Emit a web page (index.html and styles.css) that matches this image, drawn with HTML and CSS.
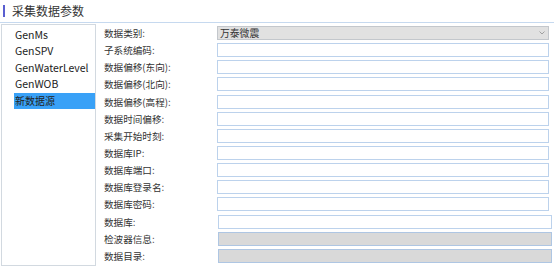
FILE: index.html
```html
<!DOCTYPE html>
<html lang="zh-CN">
<head>
<meta charset="UTF-8">
<title>采集数据参数</title>
<link rel="stylesheet" href="styles.css">
</head>
<body>

<div class="title">
  <span class="title-bar"></span>
  <span class="title-text">采集数据参数</span>
</div>

<div class="main">
  <ul class="source-list">
    <li>GenMs</li>
    <li>GenSPV</li>
    <li>GenWaterLevel</li>
    <li>GenWOB</li>
    <li class="selected">新数据源</li>
  </ul>

  <div class="form">
    <label>数据类别:</label>
    <div class="select">
      <span>万泰微震</span>
      <svg class="arrow" width="6" height="4" viewBox="0 0 6 4"><path d="M0.5 0.5 L3 3 L5.5 0.5" fill="none" stroke="#a0a0a0" stroke-width="1"/></svg>
    </div>
    <label>子系统编码:</label>
    <div class="input"></div>
    <label>数据偏移(东向):</label>
    <div class="input"></div>
    <label>数据偏移(北向):</label>
    <div class="input"></div>
    <label>数据偏移(高程):</label>
    <div class="input"></div>
    <label>数据时间偏移:</label>
    <div class="input"></div>
    <label>采集开始时刻:</label>
    <div class="input"></div>
    <label>数据库IP:</label>
    <div class="input"></div>
    <label>数据库端口:</label>
    <div class="input"></div>
    <label>数据库登录名:</label>
    <div class="input"></div>
    <label>数据库密码:</label>
    <div class="input"></div>
    <label>数据库:</label>
    <div class="input shifted"></div>
    <label>检波器信息:</label>
    <div class="input shifted disabled"></div>
    <label>数据目录:</label>
    <div class="input shifted disabled"></div>
  </div>
</div>

</body>
</html>
```

FILE: styles.css
```css
/* page */
body {
  margin: 0;
  padding: 0;
  background-color: #fff;
  font-family: "Noto Sans CJK SC", "Noto Sans", sans-serif;
  color: #333;
  width: 554px;
  height: 270px;
  overflow: hidden;
}

/* header with accent bar */
.title {
  display: flex;
  align-items: center;
  height: 22px;
  border-bottom: 1px solid #c6d9ef;
  padding-left: 3px;
}
.title-bar {
  width: 2px;
  height: 12px;
  background-color: #5a5fd0;
  margin-right: 7px;
}
.title-text {
  font-size: 12px;
  color: #333;
  line-height: 14px;
}

.main {
  display: flex;
  padding-top: 1px;
}

/* data source list */
.source-list {
  list-style-type: none;
  margin: 0 0 0 1px;
  padding: 2px 0 0 12px;
  width: 81px;
  height: 238px;
  border: 1px solid #d2d9e0;
  font-size: 10.5px;
  color: #222;
}
.source-list li {
  height: 16.4px;
  line-height: 16.4px;
  padding-left: 1px;
}
.source-list li.selected {
  background-color: #39a1f7;
  font-size: 10px;
}

/* form grid */
.form {
  display: grid;
  grid-template-columns: 113px 332px;
  grid-auto-rows: 14px;
  row-gap: 3.15px;
  margin-left: 8px;
  padding-top: 2px;
  font-size: 9.6px;
}
.form label {
  line-height: 14px;
  color: #333;
  white-space: nowrap;
}
.select {
  display: flex;
  justify-content: space-between;
  align-items: center;
  background-color: #e1e1e1;
  border: 1px solid #c3c7cc;
  padding: 0 3px 0 2px;
  font-size: 9.8px;
  color: #333;
}
.input {
  border: 1px solid #bcd2ec;
  background-color: #fff;
}
.input.shifted {
  margin-left: 1px;
  margin-right: -3px;
}
.input.disabled {
  background-color: #d9d9d9;
  border-color: #aec6e3;
}
```
